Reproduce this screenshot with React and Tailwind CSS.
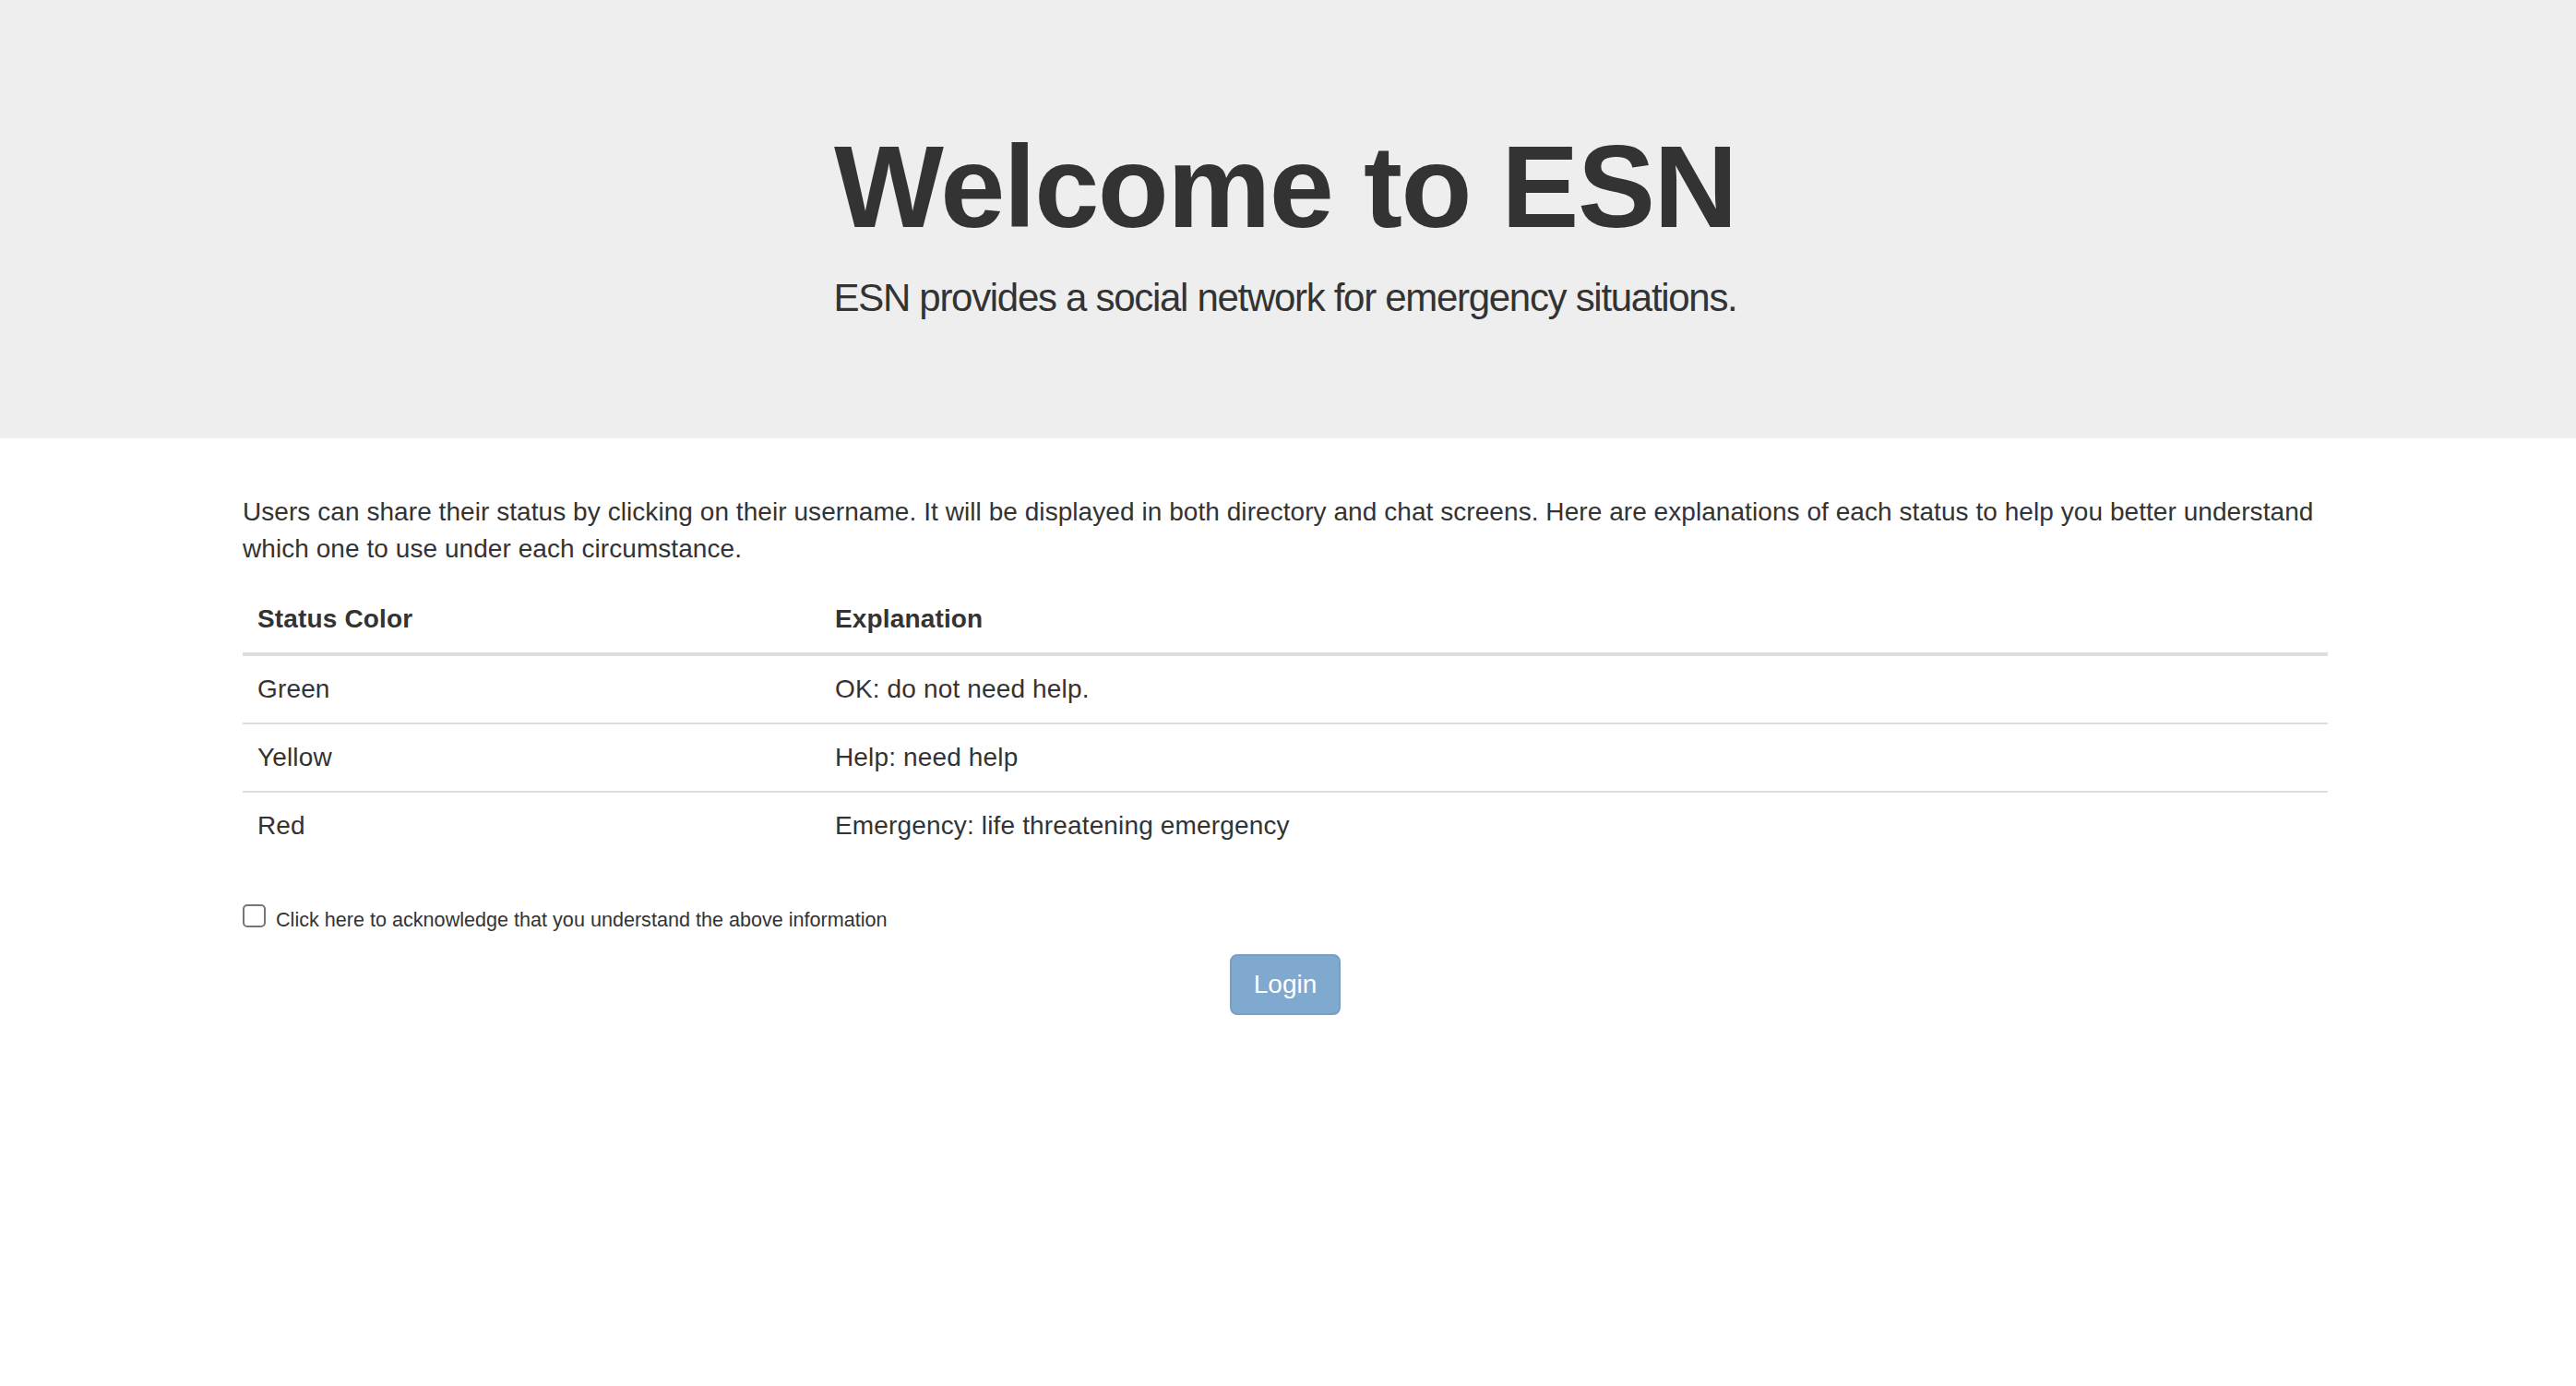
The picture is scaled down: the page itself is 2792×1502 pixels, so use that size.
import React from "react";

const statuses = [
    { color: "Green", explanation: "OK: do not need help." },
    { color: "Yellow", explanation: "Help: need help" },
    { color: "Red", explanation: "Emergency: life threatening emergency" },
];

const App = () => {
    return (
        <div className="min-h-screen bg-white text-[#333] font-['Liberation_Sans',Arial,sans-serif]">
            {/* Jumbotron */}
            <div className="bg-[#eee] pt-[94px] pb-[92px] pr-[6px] text-center">
                <h1 className="mt-[40px] mb-[20px] text-[126px] leading-[1.1] font-bold tracking-[-1.5px]">
                    Welcome to ESN
                </h1>
                <p className="mb-[30px] text-[42px] leading-[60px] tracking-[-1.3px]">
                    ESN provides a social network for emergency situations.
                </p>
            </div>

            {/* Content */}
            <div className="w-[2260px] ml-[263px] mt-[60px]">
                <p className="mb-[20px] text-[28px] leading-[40px] tracking-[0.06px]">
                    Users can share their status by clicking on their username. It will be displayed in both directory and chat screens. Here are explanations of each status to help you better understand which one to use under each circumstance.
                </p>

                <table className="w-full mb-[40px] border-collapse text-[28px] leading-[40px] tracking-[0.15px]">
                    <thead>
                        <tr className="border-b-4 border-[#ddd]">
                            <th className="w-[626px] px-4 py-4 text-left font-bold">Status Color</th>
                            <th className="px-4 py-4 text-left font-bold">Explanation</th>
                        </tr>
                    </thead>
                    <tbody>
                        {statuses.map((s, i) => (
                            <tr key={s.color} className={i > 0 ? "border-t-2 border-[#ddd]" : ""}>
                                <td className="px-4 py-4">{s.color}</td>
                                <td className="px-4 py-4">{s.explanation}</td>
                            </tr>
                        ))}
                    </tbody>
                </table>

                <label className="flex items-center h-[44px]">
                    <input
                        type="checkbox"
                        className="appearance-none w-[25px] h-[25px] border-2 border-[#767676] rounded-[5px] bg-white"
                    />
                    <span className="ml-[11px] text-[21.6px] leading-[30px] mt-[8px]">
                        Click here to acknowledge that you understand the above information
                    </span>
                </label>

                <div className="mt-[19px] text-center">
                    <button
                        disabled
                        className="px-[24px] py-[11px] border-2 border-[#77a0c4] rounded-[8px] bg-[#80a9cf] text-white text-[28px] leading-[40px]"
                    >
                        Login
                    </button>
                </div>
            </div>
        </div>
    );
};

export default App;
